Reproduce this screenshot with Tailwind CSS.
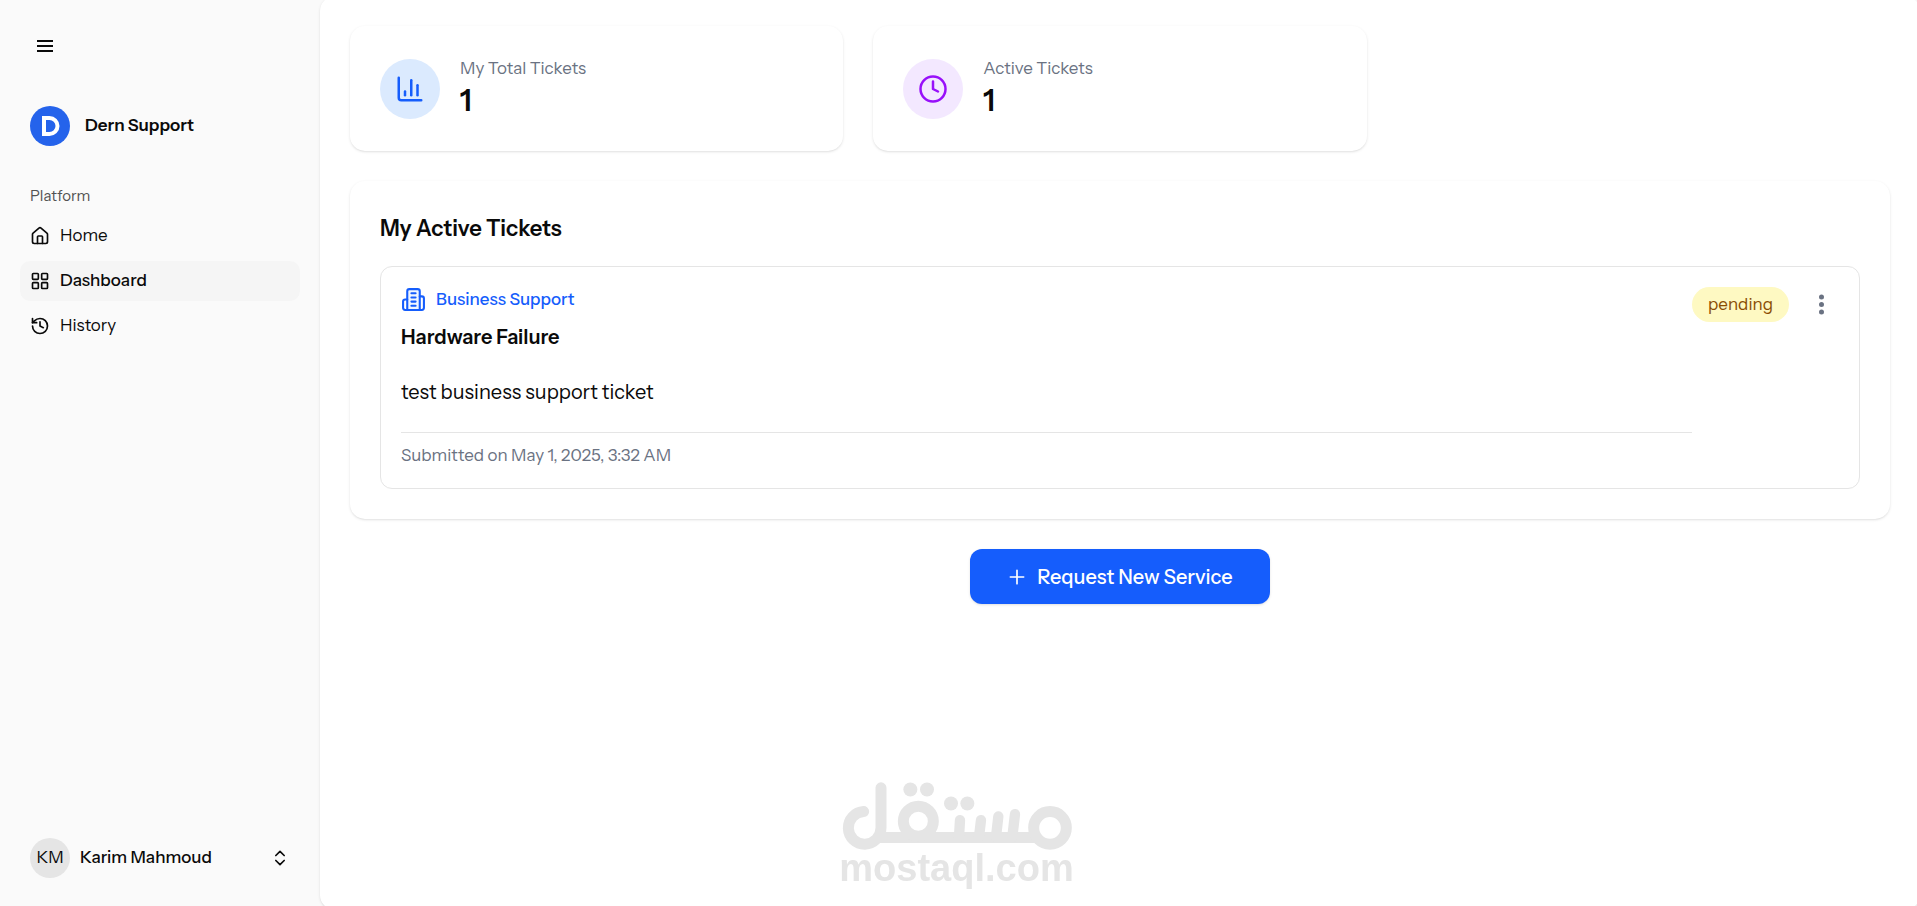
<!DOCTYPE html>
<html lang="en">
  <head>
    <meta charset="UTF-8" />
    <meta name="viewport" content="width=device-width, initial-scale=1.0" />
    <title>Dashboard - Dern Support</title>
    <script src="https://cdn.jsdelivr.net/npm/@tailwindcss/browser@4"></script>
  </head>

  <body class="bg-[#fafafa] font-['Instrument_Sans','Inter',sans-serif] text-neutral-950">
    <div class="flex h-screen overflow-hidden">
      <!-- Sidebar -->
      <aside class="flex w-80 shrink-0 flex-col justify-between p-5">
        <div>
          <button type="button" aria-label="Toggle sidebar" class="grid h-[52px] w-[50px] place-items-center">
            <svg class="size-5" viewBox="0 0 20 20" fill="none" stroke="currentColor" stroke-width="2">
              <path d="M2 5h16M2 10h16M2 15h16" />
            </svg>
          </button>

          <a href="#" class="mt-[34px] flex items-center gap-[15px] px-[10px]">
            <svg class="size-10" viewBox="0 0 40 40">
              <circle cx="20" cy="20" r="20" fill="#2563eb" />
              <path d="M14 12h5.500a8 8 0 0 1 0 16H14z" fill="none" stroke="#fff" stroke-width="4" />
            </svg>
            <span class="text-[17px] font-semibold">Dern Support</span>
          </a>

          <p class="mt-[30px] flex h-10 items-center px-[10px] text-[15px] text-neutral-600">Platform</p>
          <nav class="flex flex-col gap-[5px]">
            <a href="#" class="flex h-10 items-center gap-[10px] rounded-[10px] px-[10px] text-[17px]">
              <svg class="size-5" viewBox="0 0 24 24" fill="none" stroke="currentColor" stroke-width="2" stroke-linecap="round" stroke-linejoin="round">
                <path d="M15 21v-8a1 1 0 0 0-1-1h-4a1 1 0 0 0-1 1v8" />
                <path d="M3 10a2 2 0 0 1 .709-1.528l7-5.999a2 2 0 0 1 2.582 0l7 5.999A2 2 0 0 1 21 10v9a2 2 0 0 1-2 2H5a2 2 0 0 1-2-2z" />
              </svg>
              Home
            </a>
            <a href="#" aria-current="page" class="flex h-10 items-center gap-[10px] rounded-[10px] bg-neutral-100 px-[10px] text-[17px] font-medium">
              <svg class="size-5" viewBox="0 0 24 24" fill="none" stroke="currentColor" stroke-width="2" stroke-linecap="round" stroke-linejoin="round">
                <rect width="7" height="7" x="3" y="3" rx="1" />
                <rect width="7" height="7" x="14" y="3" rx="1" />
                <rect width="7" height="7" x="14" y="14" rx="1" />
                <rect width="7" height="7" x="3" y="14" rx="1" />
              </svg>
              Dashboard
            </a>
            <a href="#" class="flex h-10 items-center gap-[10px] rounded-[10px] px-[10px] text-[17px]">
              <svg class="size-5" viewBox="0 0 24 24" fill="none" stroke="currentColor" stroke-width="2" stroke-linecap="round" stroke-linejoin="round">
                <path d="M3 12a9 9 0 1 0 9-9 9.750 9.750 0 0 0-6.740 2.740L3 8" />
                <path d="M3 3v5h5" />
                <path d="M12 7v5l4 2" />
              </svg>
              History
            </a>
          </nav>
        </div>

        <button type="button" class="flex h-[56px] w-full items-center gap-[10px] px-[10px] text-left">
          <span class="grid size-10 place-items-center rounded-full bg-neutral-200 text-[17px]">KM</span>
          <span class="grow text-[17px] font-medium">Karim Mahmoud</span>
          <svg class="size-5" viewBox="0 0 24 24" fill="none" stroke="currentColor" stroke-width="2" stroke-linecap="round" stroke-linejoin="round">
            <path d="m7 15 5 5 5-5" />
            <path d="m7 9 5-5 5 5" />
          </svg>
        </button>
      </aside>

      <!-- Content -->
      <main class="-my-1 -mr-[3px] flex grow flex-col gap-[30px] rounded-[15px] bg-white p-[30px] shadow-sm">
        <div class="grid grid-cols-3 gap-[30px]">
          <div class="flex h-[125px] items-center gap-5 rounded-[15px] px-[30px] shadow-sm">
            <div class="grid size-[60px] place-items-center rounded-full bg-blue-100 text-blue-600">
              <svg class="size-[30px]" viewBox="0 0 24 24" fill="none" stroke="currentColor" stroke-width="2" stroke-linecap="round" stroke-linejoin="round">
                <path d="M3 3v16a2 2 0 0 0 2 2h16" />
                <path d="M18 17V9" />
                <path d="M13 17V5" />
                <path d="M8 17v-3" />
              </svg>
            </div>
            <div>
              <p class="text-[17px] leading-[25px] text-gray-500">My Total Tickets</p>
              <p class="text-[30px] leading-10 font-semibold">1</p>
            </div>
          </div>
          <div class="flex h-[125px] items-center gap-5 rounded-[15px] px-[30px] shadow-sm">
            <div class="grid size-[60px] place-items-center rounded-full bg-purple-100 text-purple-600">
              <svg class="size-[30px]" viewBox="0 0 24 24" fill="none" stroke="currentColor" stroke-width="2" stroke-linecap="round" stroke-linejoin="round">
                <circle cx="12" cy="12" r="10" />
                <path d="M12 6v6l4 2" />
              </svg>
            </div>
            <div>
              <p class="text-[17px] leading-[25px] text-gray-500">Active Tickets</p>
              <p class="text-[30px] leading-10 font-semibold">1</p>
            </div>
          </div>
        </div>

        <section class="rounded-[15px] p-[30px] shadow-sm">
          <h2 class="mb-5 text-[22px] leading-[35px] font-semibold">My Active Tickets</h2>
          <article class="flex items-start rounded-xl border border-neutral-200 p-5">
            <div class="grow">
              <div class="flex items-center gap-[10px] text-blue-600">
                <svg class="size-[25px]" viewBox="0 0 24 24" fill="none" stroke="currentColor" stroke-width="2" stroke-linecap="round" stroke-linejoin="round">
                  <path class="fill-blue-50" d="M6 22V4a2 2 0 0 1 2-2h8a2 2 0 0 1 2 2v18Z" />
                  <path d="M6 12H4a2 2 0 0 0-2 2v6a2 2 0 0 0 2 2h2" />
                  <path d="M18 9h2a2 2 0 0 1 2 2v9a2 2 0 0 1-2 2h-2" />
                  <path d="M10 6h4" />
                  <path d="M10 10h4" />
                  <path d="M10 14h4" />
                  <path d="M10 18h4" />
                </svg>
                <span class="text-[17px] leading-[25px] font-medium">Business Support</span>
              </div>
              <h3 class="mt-[10px] text-xl leading-[30px] font-semibold">Hardware Failure</h3>
              <p class="mt-[25px] text-xl leading-[30px]">test business support ticket</p>
              <p class="mt-[25px] border-t border-neutral-200 pt-[10px] text-[17px] leading-[25px] text-gray-500">
                Submitted on May 1, 2025, 3:32 AM
              </p>
            </div>
            <div class="flex items-center gap-[15px]">
              <span class="rounded-full bg-yellow-100 px-4 py-[5px] text-[17px] leading-[25px] text-yellow-800">pending</span>
              <button type="button" aria-label="Ticket actions" class="grid size-[35px] place-items-center text-gray-500">
                <svg class="size-[25px]" viewBox="0 0 20 20" fill="currentColor">
                  <path d="M10 6a2 2 0 1 1 0-4 2 2 0 0 1 0 4ZM10 12a2 2 0 1 1 0-4 2 2 0 0 1 0 4ZM10 18a2 2 0 1 1 0-4 2 2 0 0 1 0 4Z" />
                </svg>
              </button>
            </div>
          </article>
        </section>

        <button type="button" class="flex h-[55px] items-center gap-[10px] self-center rounded-xl bg-blue-600 px-[37px] text-xl font-medium text-white shadow-sm">
          <svg class="size-5" viewBox="0 0 24 24" fill="none" stroke="currentColor" stroke-width="2" stroke-linecap="round">
            <path d="M4 12h16M12 4v16" />
          </svg>
          Request New Service
        </button>
      </main>
    </div>

    <!-- Watermark -->
    <div class="pointer-events-none fixed inset-x-0 bottom-5 flex flex-col items-center pr-1 text-[#e5e5e5]">
      <svg class="h-[68px] w-[230px]" viewBox="69 36 690 203" fill="none" stroke="currentColor" stroke-width="33" stroke-linecap="round" stroke-linejoin="round">
        <path d="M134 124a49 49 0 1 0 52 49V53M180 202H650" />
        <circle cx="298" cy="153" r="45" />
        <circle cx="693" cy="173" r="49" />
        <path d="M420 200l3-50M480 200l6-50M531 200l7-61M580 200l8-68" stroke-width="31" />
        <g fill="currentColor" stroke="none">
          <circle cx="274" cy="58" r="21" />
          <circle cx="324" cy="58" r="21" />
          <circle cx="396" cy="100" r="21" />
          <circle cx="445" cy="100" r="21" />
        </g>
      </svg>
      <p class="font-['Liberation_Sans',sans-serif] text-[38px] leading-9 font-bold">mostaql.com</p>
    </div>
  </body>
</html>
